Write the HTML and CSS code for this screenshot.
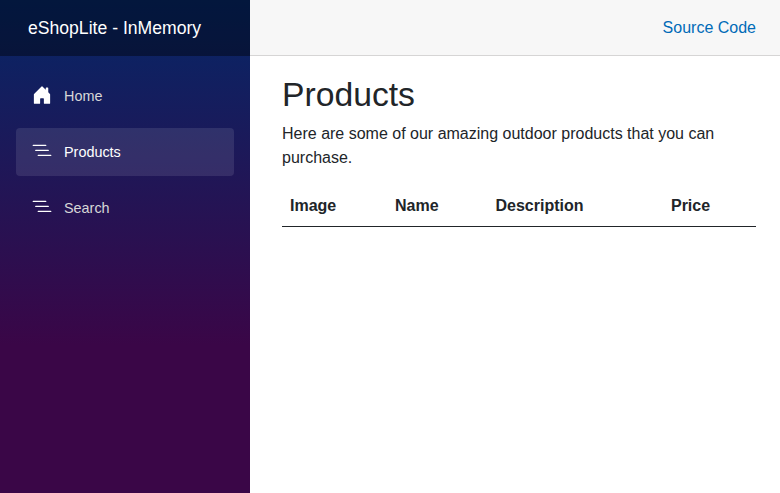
FILE: index.html
```html
<!DOCTYPE html>
<html lang="en">
<head>
<meta charset="utf-8">
<title>Products</title>
<link rel="stylesheet" href="styles.css">
</head>
<body>
<div class="page">
  <div class="sidebar">
    <div class="top-row brand-row"><a class="brand">eShopLite - InMemory</a></div>
    <nav class="nav">
      <a class="nav-link"><svg class="icon" viewBox="0 0 16 16" fill="currentColor"><path d="M6.5 14.5v-3.505c0-.245.25-.495.5-.495h2c.25 0 .5.25.5.5v3.5a.5.5 0 0 0 .5.5h4a.5.5 0 0 0 .5-.5v-7a.5.5 0 0 0-.146-.354L13 5.793V2.5a.5.5 0 0 0-.5-.5h-1a.5.5 0 0 0-.5.5v1.293L8.354 1.146a.5.5 0 0 0-.708 0l-6 6A.5.5 0 0 0 1.5 7.5v7a.5.5 0 0 0 .5.5h4a.5.5 0 0 0 .5-.5Z"/></svg>Home</a>
      <a class="nav-link active"><svg class="icon" viewBox="0 0 16 16" fill="currentColor"><path fill-rule="evenodd" d="M4.5 11.5A.5.5 0 0 1 5 11h10a.5.5 0 0 1 0 1H5a.5.5 0 0 1-.5-.5zm-2-4A.5.5 0 0 1 3 7h10a.5.5 0 0 1 0 1H3a.5.5 0 0 1-.5-.5zm-2-4A.5.5 0 0 1 1 3h10a.5.5 0 0 1 0 1H1a.5.5 0 0 1-.5-.5z"/></svg>Products</a>
      <a class="nav-link"><svg class="icon" viewBox="0 0 16 16" fill="currentColor"><path fill-rule="evenodd" d="M4.5 11.5A.5.5 0 0 1 5 11h10a.5.5 0 0 1 0 1H5a.5.5 0 0 1-.5-.5zm-2-4A.5.5 0 0 1 3 7h10a.5.5 0 0 1 0 1H3a.5.5 0 0 1-.5-.5zm-2-4A.5.5 0 0 1 1 3h10a.5.5 0 0 1 0 1H1a.5.5 0 0 1-.5-.5z"/></svg>Search</a>
    </nav>
  </div>
  <main class="main">
    <div class="top-row"><a class="source">Source Code</a></div>
    <article class="content">
      <h1>Products</h1>
      <p>Here are some of our amazing outdoor products that you can purchase.</p>
      <table class="table">
        <thead><tr><th>Image</th><th>Name</th><th>Description</th><th>Price</th></tr></thead>
        <tbody></tbody>
      </table>
    </article>
  </main>
</div>
</body>
</html>
```
FILE: styles.css
```css
* { box-sizing: border-box; }
body {
  margin: 0;
  font: 16px/1.5 "Liberation Sans", Arial, sans-serif;
  color: #212529;
  background: #fff;
}
.page { display: flex; height: 100vh; overflow: hidden; }
.sidebar {
  width: 250px;
  flex: none;
  background-image: linear-gradient(180deg, rgb(5, 39, 103) 0%, #3a0647 70%);
}
.main { flex: 1; }
.top-row {
  height: 56px;
  display: flex;
  align-items: center;
  justify-content: flex-end;
  padding: 0 24px 0 32px;
  background: #f7f7f7;
  border-bottom: 1px solid #d6d5d5;
}
.brand-row {
  justify-content: flex-start;
  padding: 0 28px;
  background: rgba(0, 0, 0, 0.4);
  border: 0;
}
.brand { color: #fff; font-size: 17.6px; white-space: nowrap; }
.nav { padding: 16px 16px 0; }
.nav-link {
  display: flex;
  align-items: center;
  height: 48px;
  margin-bottom: 8px;
  padding: 0 16px;
  border-radius: 4px;
  color: #d7d7d7;
  font-size: 14.4px;
  line-height: 48px;
}
.active { color: #fff; background: rgba(255, 255, 255, 0.1); }
.icon {
  width: 20px;
  height: 20px;
  margin: -2px 12px 0 0;
  color: #fff;
}
.source { color: #006bb7; }
.content { padding: 17.6px 24px 0 32px; }
h1 { margin: 0 0 8px; font-size: calc(22px + 1.5vw); font-weight: 500; line-height: 1.2; }
p { margin: 0 0 16px; }
.table { width: 100%; border-collapse: collapse; }
th { padding: 8px; text-align: left; border-bottom: 1px solid #212529; }
```
